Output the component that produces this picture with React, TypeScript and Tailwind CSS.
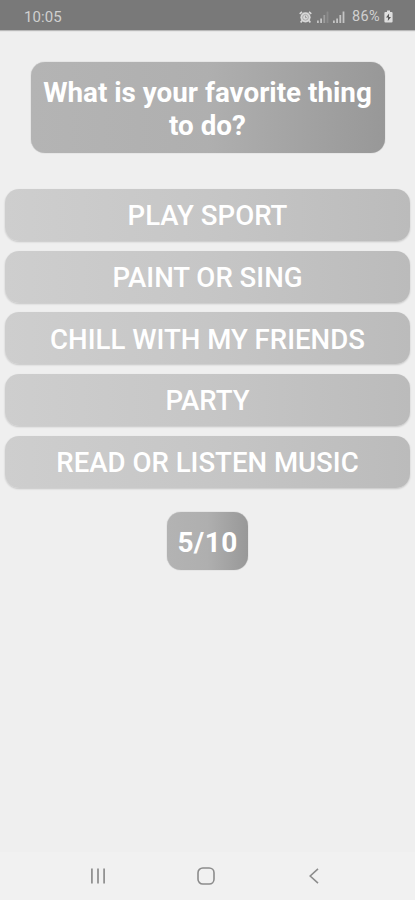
import { useState } from 'react';
import clsx from 'clsx';

const answers = [
  'Play sport',
  'Paint or sing',
  'Chill with my friends',
  'Party',
  'Read or listen music',
];

const AlarmIcon = () => (
  <svg width="13" height="12" viewBox="0 0 13 12" fill="none">
    <path d="M0.7 2.9 3 0.9M12.3 2.9 10 0.9" stroke="#d8d8d8" strokeWidth="1.6" />
    <circle cx="6.5" cy="6.3" r="5.1" fill="#d8d8d8" />
    <path d="M3 9.6 1.7 11.5M10 9.6l1.3 1.9" stroke="#d8d8d8" strokeWidth="1.7" />
    <circle cx="6.5" cy="6.3" r="2.9" stroke="#a0a0a0" strokeWidth="0.8" />
    <path d="M6.5 4.7v1.9h1.3" stroke="#8a8a8a" strokeWidth="0.8" />
  </svg>
);

const SignalIcon = ({ weak = false }: { weak?: boolean }) => (
  <svg width="12" height="12" viewBox="0 0 12 12" fill="#c4c4c4">
    <rect x="0" y="9.5" width="1.8" height="2.5" />
    <rect x="3.2" y="7.5" width="1.8" height="4.5" />
    <rect x="6.4" y="4" width="1.8" height="8" opacity={weak ? 0.5 : 1} />
    <rect x="9.6" y="0.5" width="1.8" height="11.5" opacity={weak ? 0.25 : 1} />
  </svg>
);

const BatteryIcon = () => (
  <svg width="9" height="13" viewBox="0 0 9 13">
    <path d="M3 0.5h3V2h1.5Q8.6 2 8.6 3.1v8.3q0 1.1-1.1 1.1h-6Q0.4 12.5 0.4 11.4V3.1Q0.4 2 1.5 2H3z" fill="#dedede" />
    <path d="M5.1 3.5 2 7.6h2.1L3.8 11 7 6.9H4.9z" fill="#555555" />
  </svg>
);

export default function App() {
  const [selected, setSelected] = useState<number | null>(null);

  return (
    <div className="flex h-[900px] w-[415px] flex-col bg-[#efefef] font-[Roboto,sans-serif]">
      {/* Status bar */}
      <header className="flex h-[30px] shrink-0 items-center justify-between bg-[#797979] pt-[3px] pr-[22px] pl-6 shadow-[0_1px_1px_#b8b8b8]">
        <span className="pt-px text-[15px] leading-none tracking-[0.1px] text-[#d0d0d0]">10:05</span>
        <div className="flex items-center">
          <AlarmIcon />
          <div className="ml-[5px] flex gap-1">
            <SignalIcon weak />
            <SignalIcon />
          </div>
          <span className="ml-[7px] pt-px text-[14.5px] leading-none tracking-[0.4px] text-[#d0d0d0]">86%</span>
          <div className="ml-1">
            <BatteryIcon />
          </div>
        </div>
      </header>

      <main className="flex flex-1 flex-col items-center">
        {/* Question */}
        <h1 className="mt-8 flex h-[91px] w-[354px] items-center justify-center rounded-[14px] bg-linear-to-r from-[#b4b4b4] via-[#afafaf] to-[#989898] pt-0.5 text-center text-[27.8px] leading-[33px] font-bold text-white shadow-[0_0_1px_#999]">
          <span>
            What is your favorite thing
            <br />
            to do?
          </span>
        </h1>

        {/* Answers */}
        <div className="mt-9 flex w-full flex-col gap-[9.7px] px-[5px]">
          {answers.map((answer, index) => (
            <button
              key={answer}
              onClick={() => setSelected(index)}
              className={clsx(
                'h-[52px] w-full rounded-[14px] bg-linear-to-r from-[#cecece] via-[#c6c6c6] to-[#bbbbbb] pt-0.5 text-[27.6px] leading-none font-medium text-white uppercase shadow-[0_1px_2px_rgba(0,0,0,0.18)]',
                selected === index && 'brightness-90'
              )}
            >
              {answer}
            </button>
          ))}
        </div>

        {/* Progress */}
        <div className="mt-6 flex h-[58px] w-[81px] items-center justify-center rounded-[14px] bg-linear-to-r from-[#b3b3b3] via-[#afafaf] to-[#989898] pt-1 text-[28px] leading-none font-bold tracking-[0.4px] text-white shadow-[0_0_1px_#999]">
          5/10
        </div>
      </main>

      {/* Navigation bar */}
      <nav className="flex h-12 shrink-0 items-center bg-[#f1f1f1] pb-px pl-[90px]">
        <svg width="16" height="16" viewBox="0 0 16 16" stroke="#929292" strokeWidth="1.8">
          <path d="M1.9 0.5v15M8 0.5v15M14.1 0.5v15" />
        </svg>
        <svg className="ml-[91px]" width="18" height="18" viewBox="0 0 18 18" fill="none" stroke="#8c8c8c" strokeWidth="1.6">
          <rect x="1" y="1" width="16" height="16" rx="4.8" />
        </svg>
        <svg className="ml-[94px]" width="10" height="16" viewBox="0 0 10 16" fill="none" stroke="#8c8c8c" strokeWidth="1.6">
          <path d="M9 0.8 1.2 8 9 15.2" />
        </svg>
      </nav>
    </div>
  );
}
